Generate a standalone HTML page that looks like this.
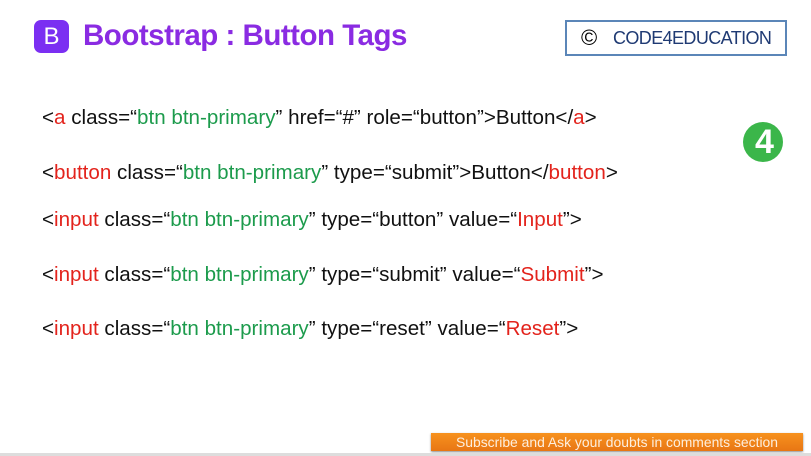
<!DOCTYPE html>
<html><head><style>
body{margin:0;width:811px;height:456px;background:#fff;overflow:hidden;position:relative;font-family:"Liberation Sans",sans-serif}
.l{position:absolute;left:42px;font-size:20.6px;color:#111;white-space:nowrap}
.r{color:#e3231c}.g{color:#1c9b4c}
</style></head><body>
<div style="position:absolute;left:34px;top:20px;width:35px;height:33px;background:#7b2ff2;border-radius:7px;color:#fff;font-size:24px;text-align:center;line-height:33px">B</div>
<div style="position:absolute;left:83px;top:19px;font-size:29.5px;font-weight:bold;color:#8a2be2;letter-spacing:-0.5px">Bootstrap : Button Tags</div>
<div style="position:absolute;left:565px;top:20px;width:222px;height:36px;border:2px solid #5b86b8;box-sizing:border-box;font-size:18px;color:#1f3a73;line-height:32px;white-space:nowrap"><span style="position:absolute;left:14px;color:#000;font-size:22px">©</span><span style="position:absolute;left:46px;letter-spacing:-0.6px">CODE4EDUCATION</span></div>
<div style="position:absolute;left:743px;top:122px;width:40px;height:40px;border-radius:50%;background:#3bb64a"></div>
<div style="position:absolute;left:755px;top:124px;color:#fff;font-weight:bold;font-size:34px;line-height:36px">4</div>
<div class="l" style="top:106px">&lt;<span class="r">a</span> class=“<span class="g">btn btn-primary</span>” href=“#” role=“button”&gt;Button&lt;/<span class="r">a</span>&gt;</div>
<div class="l" style="top:161px">&lt;<span class="r">button</span> class=“<span class="g">btn btn-primary</span>” type=“submit”&gt;Button&lt;/<span class="r">button</span>&gt;</div>
<div class="l" style="top:208px">&lt;<span class="r">input</span> class=“<span class="g">btn btn-primary</span>” type=“button” value=“<span class="r">Input</span>”&gt;</div>
<div class="l" style="top:263px">&lt;<span class="r">input</span> class=“<span class="g">btn btn-primary</span>” type=“submit” value=“<span class="r">Submit</span>”&gt;</div>
<div class="l" style="top:317px">&lt;<span class="r">input</span> class=“<span class="g">btn btn-primary</span>” type=“reset” value=“<span class="r">Reset</span>”&gt;</div>
<div style="position:absolute;left:431px;top:433px;width:372px;height:18px;background:linear-gradient(#f7921e,#e87614);box-shadow:0 1px 2px #888;color:#fdeede;font-size:13.9px;text-align:center;line-height:18px;white-space:nowrap">Subscribe and Ask your doubts in comments section</div>
<div style="position:absolute;left:0;top:453px;width:811px;height:3px;background:#ddd"></div>
</body></html>
